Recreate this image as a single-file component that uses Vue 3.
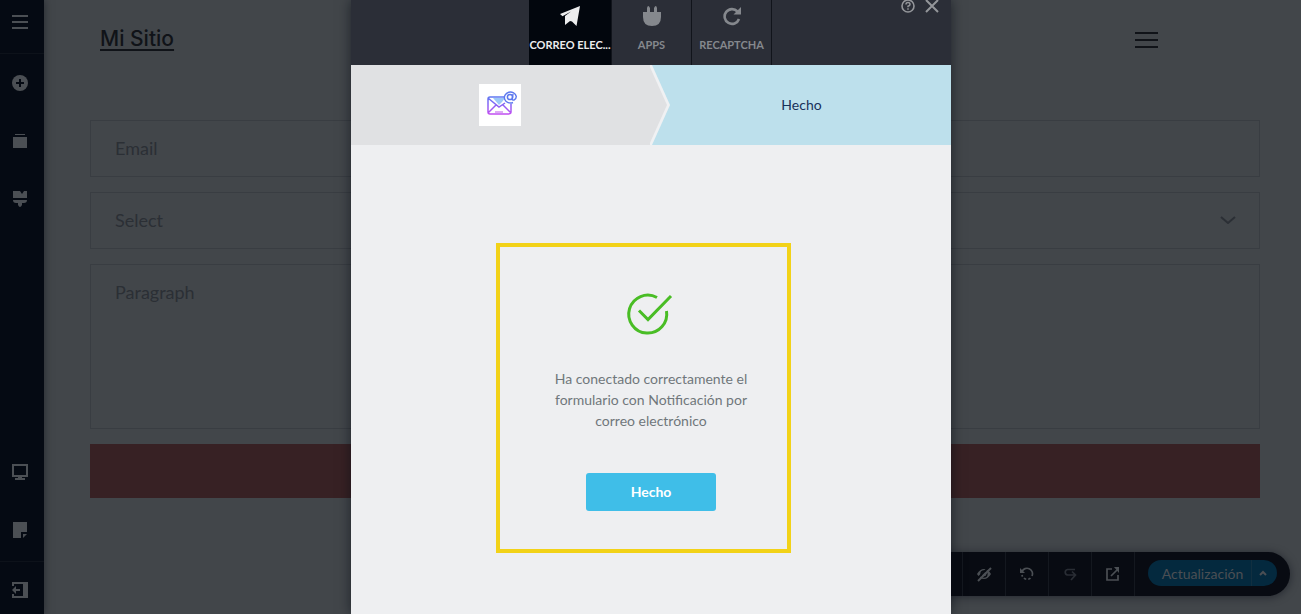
<script setup>
import { ref } from 'vue'

const email = ref('')
const choice = ref('')
const message = ref('')
const activeTab = ref('mail')
const tabs = [
  { id: 'mail', label: 'Correo elec...', title: 'Correo electrónico' },
  { id: 'apps', label: 'Apps', title: 'Apps' },
  { id: 'captcha', label: 'reCAPTCHA', title: 'reCAPTCHA' },
]
</script>

<template>
  <div class="page">
    <nav class="sidebar" aria-label="Editor">
      <button class="side-btn menu-btn" aria-label="Menú">
        <svg width="16" height="16" viewBox="0 0 16 16"><path d="M0 2h16M0 8h16M0 14h16" stroke="currentColor" stroke-width="2" /></svg>
      </button>
      <button class="side-btn" aria-label="Añadir">
        <svg width="16" height="16" viewBox="0 0 16 16"><circle cx="8" cy="8" r="8" fill="currentColor" /><path d="M8 4v8M4 8h8" stroke="#050a13" stroke-width="2" /></svg>
      </button>
      <button class="side-btn" aria-label="Páginas">
        <svg width="16" height="16" viewBox="0 0 16 16"><path d="M3 1h10v1H3zM1 4h14v11H1z" fill="currentColor" /></svg>
      </button>
      <button class="side-btn" aria-label="Diseño">
        <svg width="16" height="16" viewBox="0 0 16 16"><path d="M1 0h7l2 3 2-3h3v7H1zM1 9h14c0 2-1 3-3 3h-2v2q-2 4-4 0v-2H4c-2 0-3-1-3-3z" fill="currentColor" /></svg>
      </button>
      <div class="side-bottom">
        <button class="side-btn" aria-label="Vista de escritorio">
          <svg width="16" height="16" viewBox="0 0 16 16"><path d="M1 1h14v11H1z" fill="none" stroke="currentColor" stroke-width="2" /><path d="M6 13h4v1h3v2H3v-2h3z" fill="currentColor" /></svg>
        </button>
        <button class="side-btn" aria-label="Notas">
          <svg width="16" height="16" viewBox="0 0 16 16"><path d="M1 0h14v10H9v6H1zM11 12h4l-4 4z" fill="currentColor" /></svg>
        </button>
      </div>
      <button class="side-btn exit-btn" aria-label="Salir">
        <svg width="16" height="16" viewBox="0 0 16 16"><path d="M0 0h16v16H0v-4h2v2h9V2H2v2H0z" fill="currentColor" /><path d="M0 8l4-4v3h4v2H4v3z" fill="currentColor" /></svg>
      </button>
    </nav>

    <main class="site">
      <header class="site-header">
        <a href="#" class="brand">Mi Sitio</a>
        <button class="site-menu" aria-label="Navegación">
          <svg width="23" height="17" viewBox="0 0 23 17"><path d="M0 1h23M0 8h23M0 15h23" stroke="currentColor" stroke-width="2" /></svg>
        </button>
      </header>
      <form class="form" @submit.prevent>
        <input v-model="email" class="field" type="email" placeholder="Email" aria-label="Email" />
        <div class="select-wrap">
          <select v-model="choice" class="field" aria-label="Select">
            <option value="">Select</option>
          </select>
          <svg class="arrow" width="16" height="8" viewBox="0 0 16 8"><path d="M1 1l7 6 7-6" fill="none" stroke="currentColor" stroke-width="2" /></svg>
        </div>
        <textarea v-model="message" class="field area" placeholder="Paragraph" aria-label="Paragraph"></textarea>
        <button class="submit" aria-label="Enviar"></button>
      </form>
    </main>

    <div class="toolbar">
      <button class="tool" aria-label="Ocultar">
        <svg width="16" height="16" viewBox="0 0 16 16"><path d="M1 8q3-5 7-5t7 5q-3 5-7 5T1 8z" fill="currentColor" /><circle cx="8" cy="8" r="3" fill="none" stroke="#080b12" stroke-width="1.3" /><path d="M1 13L13 1" stroke="#080b12" stroke-width="2" /><path d="M2 15L15 2" stroke="currentColor" stroke-width="2" /></svg>
      </button>
      <button class="tool" aria-label="Deshacer">
        <svg width="14" height="14" viewBox="0 0 14 14"><path d="M2 4.500A5.300 5.300 0 1 1 12 9" fill="none" stroke="currentColor" stroke-width="1.700" /><path d="M0 1v5h5z" fill="currentColor" /><path d="M10.500 11.200A5.300 5.300 0 0 1 2 8" fill="none" stroke="currentColor" stroke-width="1.700" stroke-dasharray="2.500 2" /></svg>
      </button>
      <button class="tool dim" aria-label="Rehacer">
        <svg width="14" height="14" viewBox="0 0 14 14"><path d="M12 2.500H4.500a2.800 2.800 0 0 0 0 5.500H12M9 4.500L12.500 8 8 13" fill="none" stroke="currentColor" stroke-width="1.700" /></svg>
      </button>
      <button class="tool" aria-label="Abrir">
        <svg width="14" height="14" viewBox="0 0 14 14"><path d="M6 2H1v11h11V8M5 9l7-7" fill="none" stroke="currentColor" stroke-width="1.700" /><path d="M8 0h5v6z" fill="currentColor" /></svg>
      </button>
      <div class="update">
        <button class="update-main">Actualización</button>
        <button class="update-more" aria-label="Más opciones">
          <svg width="8" height="6" viewBox="0 0 8 6"><path d="M1 5l3-3 3 3" fill="none" stroke="currentColor" stroke-width="2" /></svg>
        </button>
      </div>
    </div>

    <div class="overlay">
      <section class="modal" role="dialog" aria-label="Formulario">
        <header class="modal-head">
          <div class="tabs">
            <button v-for="t in tabs" :key="t.id" class="tab" :class="{ active: activeTab === t.id }" :title="t.title" @click="activeTab = t.id">
              <svg v-if="t.id === 'mail'" width="20" height="20" viewBox="0 0 20 20"><path d="M20 0l-3.500 20-4.500-4.500-2-.5-5 4v-9l6-4.500-8.500 4.800L0 8z" fill="currentColor" /></svg>
              <svg v-else-if="t.id === 'apps'" width="20" height="20" viewBox="0 0 20 20"><path d="M1 6h4V2q1-4 3 0v4h4V2q2-4 3 0v4h4v5q0 9-9 9t-9-9z" fill="currentColor" /></svg>
              <svg v-else width="20" height="20" viewBox="0 0 20 20"><path d="M15.500 5.500A7.400 7.400 0 1 0 17 13" fill="none" stroke="currentColor" stroke-width="2.600" /><path d="M19 1v7.500h-7.500z" fill="currentColor" /></svg>
              <span class="tab-label">{{ t.label }}</span>
            </button>
          </div>
          <div class="head-actions">
            <button aria-label="Ayuda">
              <svg width="14" height="14" viewBox="0 0 14 14"><circle cx="7" cy="7" r="6" fill="none" stroke="currentColor" stroke-width="1.600" /><path d="M5 5.600Q5 3.600 7 3.600t2 1.900Q9 6.500 7 7.300v1" fill="none" stroke="currentColor" stroke-width="1.500" /><path d="M7 9.300v1.500" stroke="currentColor" stroke-width="1.500" /></svg>
            </button>
            <button aria-label="Cerrar">
              <svg width="14" height="14" viewBox="0 0 14 14"><path d="M1 1l12 12M13 1L1 13" stroke="currentColor" stroke-width="2" /></svg>
            </button>
          </div>
        </header>

        <div class="steps">
          <div class="step done">
            <div class="app-logo">
              <svg width="42" height="42" viewBox="0 0 42 42">
                <defs>
                  <linearGradient id="ink" gradientUnits="userSpaceOnUse" x1="0" y1="8" x2="0" y2="31">
                    <stop offset="0" stop-color="#4a83ee" /><stop offset=".5" stop-color="#8068f5" /><stop offset="1" stop-color="#c64cf0" />
                  </linearGradient>
                </defs>
                <path d="M14 14h12l-3 4-3 3z" fill="#9bc8f8" />
                <path d="M25 13H11a2 2 0 0 0-2 2v13q0 2 2 2h18q3 0 3-2v-8M9 14l11 9 6-4M9 29l8-8M32 29l-8-8" fill="none" stroke="url(#ink)" stroke-width="1.500" />
                <path d="M16 28h8" stroke="#d58cf5" stroke-width="1.500" />
                <circle cx="31" cy="13" r="2.600" fill="none" stroke="#5c78ee" stroke-width="1.500" />
                <path d="M34 10l-.7 4.500q0 2 1.700 1.500 2.300-1 2.300-3.500A6 5.500 0 1 0 34 18.500" fill="none" stroke="#5c78ee" stroke-width="1.400" />
              </svg>
            </div>
            <svg class="chevron" width="20" height="80" viewBox="0 0 20 80"><path d="M-1 0h2l18 40L1 80h-2z" fill="#f0f1f3" /><path d="M-2 0L16 40-2 80z" fill="#e0e1e3" /></svg>
          </div>
          <div class="step current">Hecho</div>
        </div>

        <div class="modal-body">
          <div class="result">
            <svg width="46" height="43" viewBox="1 0 46 43"><path d="M30 4.500A19 19 0 1 0 39.500 18M12 17.500l9 9L44 3" fill="none" stroke="#49bd25" stroke-width="3" /></svg>
            <p>Ha conectado correctamente el formulario con Notificación por correo electrónico</p>
            <button class="finish">Hecho</button>
          </div>
        </div>
      </section>
    </div>
  </div>
</template>

<style>
body {
  margin: 0;
}
</style>

<style scoped>
* {
  box-sizing: border-box;
}
button {
  border: 0;
  padding: 0;
  background: none;
  color: inherit;
  font: inherit;
}
svg {
  display: block;
}
.page {
  position: relative;
  display: flex;
  height: 100vh;
  overflow: hidden;
  background: #42464a;
  font-family: Lato, "Open Sans", sans-serif;
}
.sidebar {
  display: flex;
  flex-direction: column;
  flex: none;
  width: 44px;
  background: #050a13;
  color: #4b4f54;
  box-shadow: 0 0 8px rgba(5, 10, 19, 0.5);
}
.side-btn {
  display: flex;
  align-items: center;
  justify-content: center;
  height: 58px;
  padding-right: 4px;
}
.menu-btn {
  height: 54px;
  padding-bottom: 10px;
  border-bottom: 1px solid #0d121a;
}
.side-bottom {
  display: flex;
  flex-direction: column;
  margin-top: auto;
  padding-bottom: 2px;
}
.exit-btn {
  height: 53px;
  padding-top: 4px;
  border-top: 1px solid #0d121a;
}
.site {
  flex: 1;
  padding: 0 41px 0 46px;
}
.site-header {
  display: flex;
  justify-content: space-between;
  align-items: center;
  height: 80px;
  margin-bottom: 40px;
  padding: 0 102px 0 10px;
  color: #101318;
}
.brand {
  padding-bottom: 2px;
  color: inherit;
  font: 500 21px/28px Inter, sans-serif;
  text-underline-offset: 3px;
}
.form {
  display: flex;
  flex-direction: column;
  gap: 15px;
}
.field {
  display: block;
  width: 100%;
  height: 57px;
  margin: 0;
  padding: 0 24px 2px;
  border: 1px solid #393d42;
  border-radius: 0;
  background: transparent;
  color: #2b2f35;
  font: 18px/24px Lato, sans-serif;
  appearance: none;
}
.field::placeholder {
  color: #2b2f35;
  opacity: 1;
}
.area {
  height: 165px;
  padding-top: 15px;
  resize: none;
}
.select-wrap {
  position: relative;
  color: #2b2f35;
}
.arrow {
  position: absolute;
  top: 24px;
  right: 24px;
}
.submit {
  height: 54px;
  background: #372124;
}
.toolbar {
  position: absolute;
  right: 11px;
  bottom: 18px;
  display: flex;
  align-items: center;
  height: 44px;
  padding: 0 13px 0 100px;
  border-radius: 22px;
  background: #080b12;
  color: #4b4f54;
  box-shadow: 0 1px 8px rgba(5, 10, 19, 0.5);
}
.tool {
  display: flex;
  align-items: center;
  justify-content: center;
  width: 43px;
  height: 44px;
  border-left: 1px solid #14181f;
}
.tool:nth-child(4) {
  width: 44px;
  border-right: 1px solid #14181f;
}
.dim {
  color: #292d34;
}
.update {
  display: flex;
  height: 26px;
  margin-left: 13px;
  margin-bottom: 2px;
  border-radius: 13px;
  background: #04293e;
  font-size: 14px;
}
.update-main {
  width: 103px;
  padding-left: 6px;
}
.update-more {
  display: flex;
  align-items: center;
  justify-content: center;
  width: 26px;
  padding-right: 3px;
  border-left: 1px solid #112f40;
}
.overlay {
  position: absolute;
  inset: 0;
  display: flex;
  justify-content: center;
  pointer-events: none;
}
.modal {
  display: flex;
  flex-direction: column;
  width: 600px;
  background: #eeeff1;
  box-shadow: 0 0 12px rgba(5, 10, 19, 0.6);
  pointer-events: auto;
}
.modal-head {
  position: relative;
  display: flex;
  justify-content: center;
  height: 65px;
  background: #2b2e37;
  color: #94969a;
}
.tabs {
  display: flex;
}
.tab {
  display: flex;
  flex-direction: column;
  align-items: center;
  gap: 12px;
  width: 80px;
  padding-top: 6px;
  border-right: 1px solid #11141b;
  font-size: 11px;
  font-weight: 700;
  line-height: 14px;
  text-transform: uppercase;
  white-space: nowrap;
  color: #85888d;
}
.tab.active {
  width: 83px;
  background: #02060d;
  color: #ededee;
}
.head-actions {
  position: absolute;
  top: -1px;
  right: 12px;
  display: flex;
  gap: 10px;
}
.steps {
  display: flex;
  height: 80px;
}
.step {
  position: relative;
  display: flex;
  flex: 1;
  align-items: center;
  justify-content: center;
  font-size: 14px;
}
.done {
  z-index: 1;
  padding-right: 2px;
  background: #e0e1e3;
}
.current {
  padding: 0 0 2px 2px;
  background: #bde0ec;
  color: #18315a;
}
.chevron {
  position: absolute;
  top: 0;
  left: 100%;
  overflow: visible;
}
.app-logo {
  background: #fff;
}
.modal-body {
  display: flex;
  justify-content: center;
  padding: 98px 15px 0 0;
}
.result {
  display: flex;
  flex-direction: column;
  align-items: center;
  width: 295px;
  padding: 46px 24px 38px 40px;
  border: 4px solid #f2d218;
}
.result svg {
  overflow: visible;
}
.result p {
  width: 212px;
  margin: 32px 0 42px;
  font-size: 14px;
  line-height: 21px;
  text-align: center;
  color: #70777b;
}
.finish {
  width: 130px;
  height: 38px;
  padding-bottom: 2px;
  border-radius: 3px;
  background: #3fbee8;
  color: #fff;
  font-size: 14px;
  font-weight: 700;
}
</style>
